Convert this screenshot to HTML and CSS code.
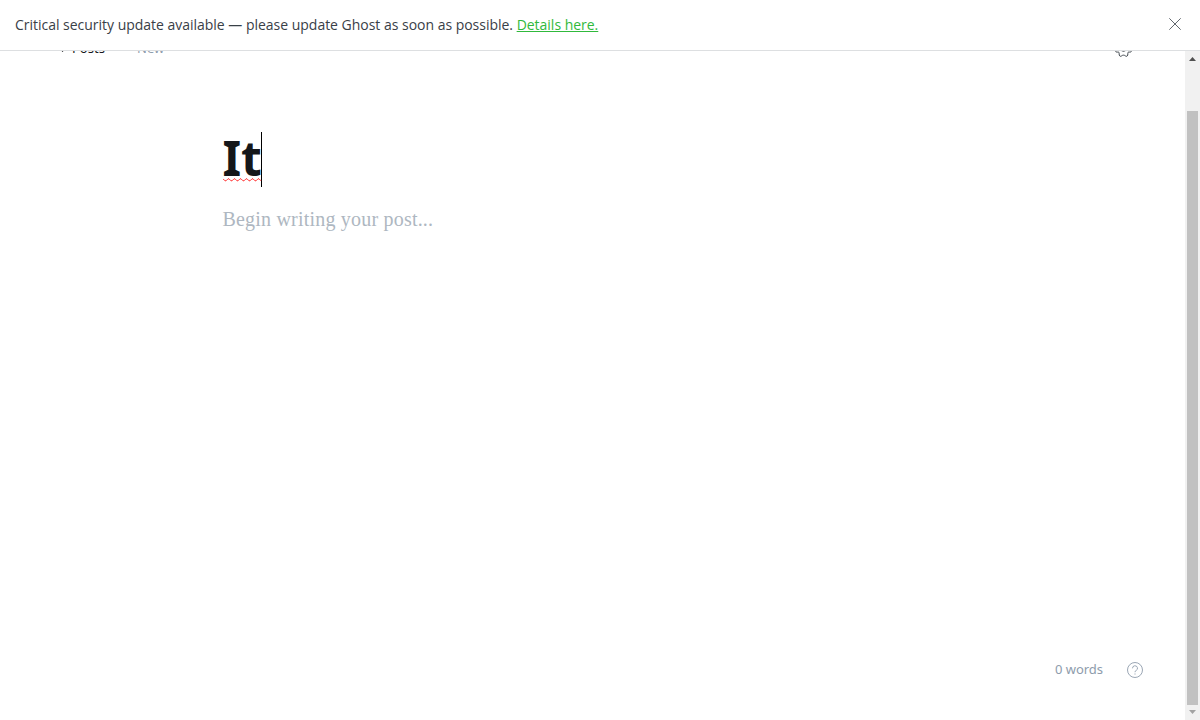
FILE: index.html
```html
<!DOCTYPE html>
<html lang="en">
<head>
<meta charset="utf-8">
<title>Editor - Ghost</title>
<link rel="stylesheet" href="styles.css">
</head>
<body>
<div class="app">
  <aside class="alert">
    <div class="alert-text">Critical security update available — please update Ghost as soon as possible. <a class="alert-link" href="#">Details here.</a></div>
    <button class="alert-close" aria-label="Close">
      <svg width="12" height="12" viewBox="0 0 12 12"><path d="M.3.3l11.4 11.4M11.7.3L.3 11.7" fill="none" stroke="#394047" stroke-width=".8"/></svg>
    </button>
  </aside>
  <div class="viewport">
    <main class="editor">
      <header class="editor-header">
        <nav class="crumbs">
          <svg class="back" width="7" height="11" viewBox="0 0 7 11"><path d="M5 .5l-4.500 4.500 4.500 4.500" fill="none" stroke="#15171a" stroke-width="1.2"/></svg>
          <a class="crumb">Posts</a>
          <span class="status">New</span>
        </nav>
        <svg class="gear" width="17" height="18" viewBox="0 0 18 18" preserveAspectRatio="none" fill="none" stroke="#394047" stroke-width="1"><path d="M7.2 1.5Q9-.7 10.8 1.5q.6 1.3 2 .8 2.700-.6 2.500 2.100-.1 1.200 1 1.700 2.200 1.200.6 2.900-1 1.400.2 2.300c.8 1.200-.3 2-1.800 1.800-1.600-.2-1.900.5-1.700 1.600.3 2.200-1.400 3.300-2.600 2.200-1.200-1-2.800-1-4 0-1.200 1.100-2.900 0-2.600-2.200.2-1.100-.1-1.800-1.700-1.600C1.200 13.300.1 12.500.9 11.300 2 10.400 2.100 10.400 1.100 9-.5 7.300-.5 7.300 1.700 6.100q1.100-.5 1-1.700-.2-2.700 2.500-2.100 1.400.5 2-.8z"/><circle cx="9" cy="9" r="3.300"/></svg>
      </header>
      <section class="content">
        <h1 class="title"><span class="typed">It<svg class="squiggle" width="39" height="4" viewBox="0 0 39 4"><path d="M0 .8l2 2h1l2-2h1l2 2h1l2-2h1l2 2h1l2-2h1l2 2h1l2-2h1l2 2h1l2-2h1l2 2h1l2-2h1l2 2" fill="none" stroke="#f33" stroke-width="1"/></svg></span><span class="caret"></span></h1>
        <p class="placeholder">Begin writing your post...</p>
      </section>
      <footer class="editor-footer">
        <span class="words">0 words</span>
        <svg width="16" height="16" viewBox="0 0 16 16" fill="none" stroke="#8e9cac"><circle cx="8" cy="8" r="7.5" stroke-width=".9"/><path d="M5.500 6.300a2.500 2.500 0 1 1 3.600 2.200C8.300 8.900 8 9.300 8 10.200" stroke-width=".9"/><path d="M7.500 12h1" stroke-width="1"/></svg>
      </footer>
    </main>
    <div class="scrollbar">
      <svg class="arrow" width="7" height="4" viewBox="0 0 7 4"><path d="M0 4l3.500-4L7 4z" fill="#505050"/></svg>
      <div class="thumb"></div>
      <svg class="arrow" width="7" height="4" viewBox="0 0 7 4"><path d="M0 0l3.500 4L7 0z" fill="#a3a3a3"/></svg>
    </div>
  </div>
</div>
</body>
</html>
```
FILE: styles.css
```css
* { box-sizing: border-box; }
body { margin: 0; background: #fff; font-family: "Noto Sans", "Open Sans", sans-serif; color: #394047; }
.app { display: flex; flex-direction: column; width: 100%; height: 720px; overflow: hidden; }
.alert { display: flex; flex: none; justify-content: space-between; align-items: center; height: 51px; padding: 0 19px 2px 15px; border-bottom: 1px solid #dddfe1; }
.alert-text { padding-top: 2px; font-family: "Open Sans", sans-serif; font-size: 14px; line-height: 20px; letter-spacing: -.018px; white-space: nowrap; }
.alert-link { color: #30b93c; text-decoration: underline; }
.alert-close { display: flex; padding: 0; border: 0; background: none; }
.viewport { display: flex; flex: 1; min-height: 0; overflow: hidden; }
.editor { display: flex; flex-direction: column; flex: 1; min-width: 0; }
.editor-header { display: flex; flex: none; justify-content: space-between; align-items: center; height: 34px; margin-top: -20px; padding: 0 53px 0 58px; }
.crumbs { display: flex; align-items: center; font-size: 13px; line-height: 18px; letter-spacing: 0; }
.back { margin: -2px 7px 0 0; }
.crumb { width: 65px; color: #15171a; }
.status { color: #8e9cac; }
.content { flex: 1; padding: 67px 222px 0; }
.title { display: flex; margin: 0; height: 55px; color: #15171a; font-size: 48px; font-weight: 700; line-height: 51px; letter-spacing: -.2px; }
.typed { position: relative; width: 39px; padding-left: .6px; }
.squiggle { position: absolute; left: 1px; top: 46px; }
.caret { width: 1px; height: 55px; background: #000; }
.placeholder { margin: 17px 0 0 .5px; color: #aeb7c1; font-family: "Liberation Serif", serif; font-size: 20px; line-height: 30px; letter-spacing: .2px; }
.editor-footer { display: flex; flex: none; justify-content: flex-end; align-items: center; gap: 24px; height: 100px; padding-right: 42px; }
.words { margin-top: -2px; color: #8e9cac; font-size: 13px; letter-spacing: -.05px; }
.scrollbar { display: flex; flex: none; flex-direction: column; align-items: center; width: 15px; padding-top: 6px; background: #f1f1f1; }
.thumb { width: 11px; height: 594px; margin: 50px 0 5px; background: #c1c1c1; }
.arrow { display: block; flex: none; }
```
